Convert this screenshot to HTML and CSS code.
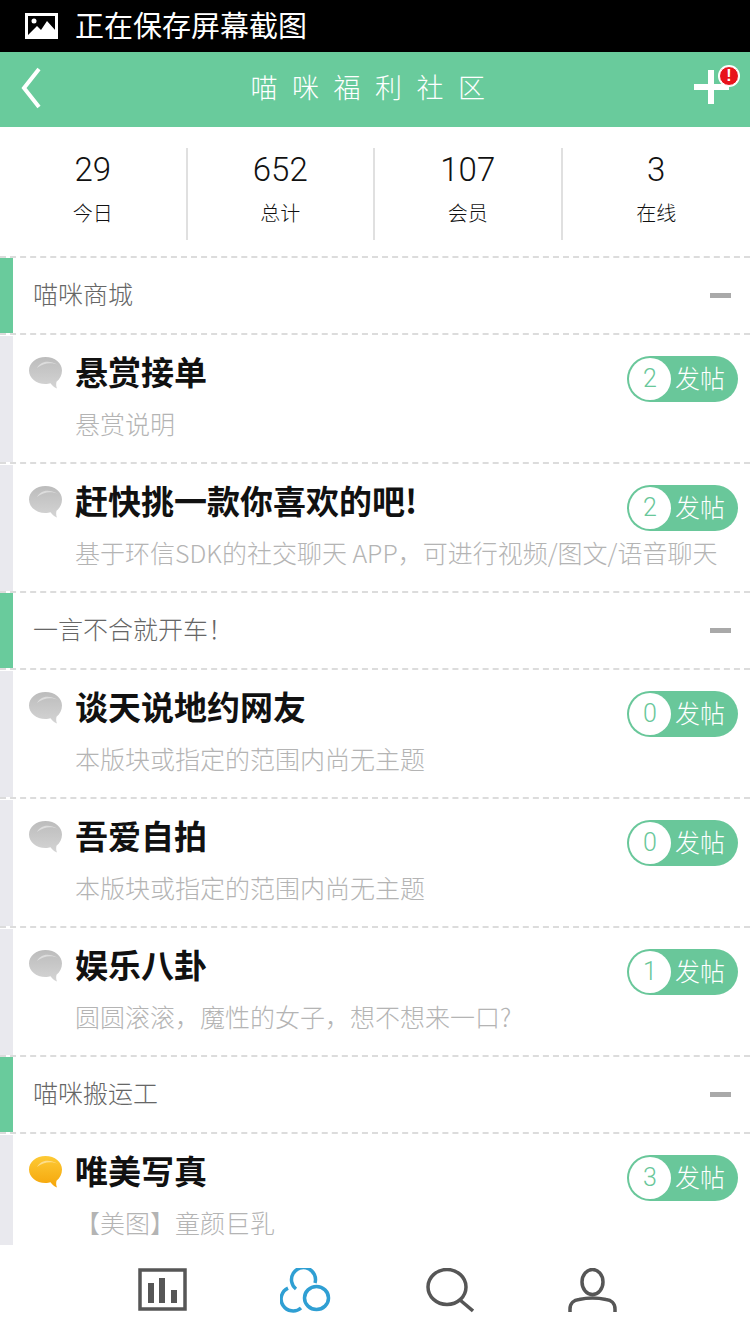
FILE: index.html
```html
<!DOCTYPE html>
<html lang="zh">
<head>
    <meta charset="UTF-8">
    <meta name="viewport" content="width=device-width, initial-scale=1.0">
    <title>喵咪福利社区</title>
    <link rel="stylesheet" href="styles.css">
</head>
<body>
    <svg class="defs" width="0" height="0">
        <defs>
            <linearGradient id="greyFill" x1="0" y1="0" x2="0" y2="1">
                <stop offset="0" stop-color="#bcbcbc"/>
                <stop offset="1" stop-color="#d4d4d4"/>
            </linearGradient>
            <linearGradient id="yellowFill" x1="0" y1="0" x2="0" y2="1">
                <stop offset="0" stop-color="#fdca35"/>
                <stop offset="1" stop-color="#f5a50a"/>
            </linearGradient>
            <path id="bubble" d="M17.500 1C8 1 1 7 1 14.500C1 22 8 28 17.500 28C19.500 28 21 27.800 22.500 27.300C24 29.500 26 31.500 29 32.500C28 30.500 28 28 28.500 25.800C32 23 34 19 34 14.500C34 7 27 1 17.500 1Z"/>
            <path id="shine" d="M9 12C12 6 20 3 30 9C24 6 15 7 9 12Z" fill="#fff" opacity="0.45"/>
        </defs>
    </svg>

    <div class="statusbar">
        <svg class="status-icon" width="33" height="26" viewBox="0 0 33 26">
            <rect x="1.500" y="1.500" width="30" height="23" fill="none" stroke="#fff" stroke-width="3"/>
            <circle cx="9" cy="8" r="2.500" fill="#fff"/>
            <path d="M2 23L12 13L16 17L22 8L31 18V24H2Z" fill="#fff"/>
        </svg>
        <span>正在保存屏幕截图</span>
    </div>

    <header class="topbar">
        <svg class="back" width="24" height="42" viewBox="0 0 24 42">
            <path d="M20 2L5 21L20 40" fill="none" stroke="#fff" stroke-width="4"/>
        </svg>
        <h1>喵咪福利社区</h1>
        <div class="add">
            <svg width="38" height="36" viewBox="0 0 38 36">
                <rect x="0" y="15" width="35" height="6" fill="#fff"/>
                <rect x="14" y="1" width="6" height="34" fill="#fff"/>
            </svg>
            <span class="alert">!</span>
        </div>
    </header>

    <section class="stats">
        <div class="stat"><b>29</b><span>今日</span></div>
        <div class="stat"><b>652</b><span>总计</span></div>
        <div class="stat"><b>107</b><span>会员</span></div>
        <div class="stat"><b>3</b><span>在线</span></div>
    </section>

    <main class="list">
        <div class="group-head"><span>喵咪商城</span><i class="minus"></i></div>
        <div class="item">
            <svg class="bubble" viewBox="0 0 35 33"><use href="#bubble" fill="url(#greyFill)"/><use href="#shine"/></svg>
            <div class="item-text"><h2>悬赏接单</h2><p>悬赏说明</p></div>
            <div class="pill"><span class="num">2</span><span class="label">发帖</span></div>
        </div>
        <div class="item">
            <svg class="bubble" viewBox="0 0 35 33"><use href="#bubble" fill="url(#greyFill)"/><use href="#shine"/></svg>
            <div class="item-text"><h2>赶快挑一款你喜欢的吧!</h2><p>基于环信SDK的社交聊天 APP，可进行视频/图文/语音聊天</p></div>
            <div class="pill"><span class="num">2</span><span class="label">发帖</span></div>
        </div>
        <div class="group-head"><span>一言不合就开车！</span><i class="minus"></i></div>
        <div class="item">
            <svg class="bubble" viewBox="0 0 35 33"><use href="#bubble" fill="url(#greyFill)"/><use href="#shine"/></svg>
            <div class="item-text"><h2>谈天说地约网友</h2><p>本版块或指定的范围内尚无主题</p></div>
            <div class="pill"><span class="num">0</span><span class="label">发帖</span></div>
        </div>
        <div class="item">
            <svg class="bubble" viewBox="0 0 35 33"><use href="#bubble" fill="url(#greyFill)"/><use href="#shine"/></svg>
            <div class="item-text"><h2>吾爱自拍</h2><p>本版块或指定的范围内尚无主题</p></div>
            <div class="pill"><span class="num">0</span><span class="label">发帖</span></div>
        </div>
        <div class="item">
            <svg class="bubble" viewBox="0 0 35 33"><use href="#bubble" fill="url(#greyFill)"/><use href="#shine"/></svg>
            <div class="item-text"><h2>娱乐八卦</h2><p>圆圆滚滚，魔性的女子，想不想来一口?</p></div>
            <div class="pill"><span class="num">1</span><span class="label">发帖</span></div>
        </div>
        <div class="group-head"><span>喵咪搬运工</span><i class="minus"></i></div>
        <div class="item">
            <svg class="bubble" viewBox="0 0 35 33"><use href="#bubble" fill="url(#yellowFill)"/><use href="#shine"/></svg>
            <div class="item-text"><h2>唯美写真</h2><p>【美图】童颜巨乳</p></div>
            <div class="pill"><span class="num">3</span><span class="label">发帖</span></div>
        </div>
    </main>

    <nav class="tabbar">
        <svg width="50" height="44" viewBox="0 0 50 44">
            <rect x="2" y="2" width="45" height="39" fill="none" stroke="#565656" stroke-width="3.500"/>
            <rect x="10" y="15" width="6" height="20" fill="#565656"/>
            <rect x="21" y="10" width="6" height="25" fill="#565656"/>
            <rect x="33" y="22" width="6" height="13" fill="#565656"/>
        </svg>
        <svg width="52" height="46" viewBox="0 0 52 46">
            <g fill="none" stroke="#2f9fd3" stroke-width="3.500">
                <path d="M16 21A12 12 0 1 1 35 15"/>
                <path d="M8 20.100A12 12 0 1 0 21 40"/>
                <ellipse cx="36.500" cy="30" rx="12" ry="11.500"/>
            </g>
        </svg>
        <svg width="50" height="46" viewBox="0 0 50 46">
            <g fill="none" stroke="#565656" stroke-width="3.500">
                <ellipse cx="23" cy="19" rx="19" ry="17.500"/>
                <path d="M36 32L49 43"/>
            </g>
        </svg>
        <svg width="52" height="46" viewBox="0 0 52 46">
            <g fill="none" stroke="#565656" stroke-width="3.500">
                <ellipse cx="26.500" cy="14" rx="10.500" ry="12.500"/>
                <path d="M4 44V41C4 35 8 32 13 31.500C22 29.500 31 29.500 40 31.500C45 32 49 35 49 41V44"/>
            </g>
        </svg>
    </nav>
</body>
</html>
```
FILE: styles.css
```css
* {
    box-sizing: border-box;
}
html, body {
    margin: 0;
    height: 1333px;
}
body {
    font-family: "Noto Sans CJK SC", "Noto Sans", sans-serif;
    background-color: #fff;
    display: flex;
    flex-direction: column;
    overflow: hidden;
}
.defs {
    position: absolute;
}
.statusbar {
    height: 52px;
    flex: none;
    background-color: #000;
    color: #fff;
    font-size: 29px;
    display: flex;
    align-items: center;
    gap: 17px;
    padding-left: 25px;
}
.statusbar span {
    margin-bottom: 4px;
}
.topbar {
    height: 75px;
    flex: none;
    background-color: #69cb9c;
    display: flex;
    align-items: center;
    justify-content: space-between;
    padding: 0 10px 4px 19px;
}
.topbar h1 {
    margin: 0 0 3px 19px;
    color: #fff;
    font-size: 27px;
    font-weight: 300;
    letter-spacing: 14.500px;
}
.add {
    position: relative;
    width: 52px;
    height: 44px;
    padding: 3px 0 0 6px;
}
.alert {
    position: absolute;
    top: 0;
    right: 1px;
    width: 20px;
    height: 20px;
    border-radius: 50%;
    background-color: #e8131b;
    border: 1px solid #fff;
    box-shadow: 0 0 0 1px #fff;
    color: #fff;
    font: bold 16px/18px "Liberation Sans", sans-serif;
    text-align: center;
}
.stats {
    height: 129px;
    flex: none;
    display: flex;
    padding-top: 21px;
    padding-bottom: 16px;
}
.stat {
    width: 187.500px;
    display: flex;
    flex-direction: column;
    align-items: center;
    border-right: 2px solid #e0e0e0;
    color: #111;
}
.stat:last-child {
    border-right: none;
}
.stat b {
    font-family: Roboto, sans-serif;
    font-weight: 300;
    font-size: 33px;
    line-height: 42px;
    margin-top: 1px;
}
.stat span {
    font-size: 20px;
    font-weight: 300;
    line-height: 30px;
    margin-top: 7px;
}
.list {
    flex: 1;
    min-height: 0;
    overflow: hidden;
}
.group-head, .item {
    position: relative;
    display: flex;
    border-top: 2px dashed #dcdcdc;
}
/* colour strip on the left of every row */
.group-head::before, .item::before {
    content: "";
    flex: none;
    width: 13px;
    background-color: #e9e9ee;
}
.group-head {
    height: 77px;
    align-items: center;
    font-size: 25px;
    font-weight: 300;
    color: #666;
}
.group-head::before {
    align-self: stretch;
    background-color: #69cb9c;
}
.group-head span {
    flex: 1;
    margin: 0 0 5px 20px;
}
.minus {
    width: 21px;
    height: 5px;
    margin-right: 19px;
    background-color: #a9a9a9;
}
.item {
    height: 129px;
}
.item::before {
    margin-top: 1px;
}
.bubble {
    width: 35px;
    height: 33px;
    flex: none;
    margin: 21px 0 0 15px;
}
.item-text {
    flex: 1;
    min-width: 0;
    margin: 18px 0 0 12px;
    white-space: nowrap;
}
.item-text h2 {
    margin: 0;
    font-size: 33px;
    font-weight: 700;
    line-height: 36px;
    color: #111;
}
.item-text p {
    margin: 19px 0 0;
    font-size: 25px;
    font-weight: 300;
    line-height: 30px;
    color: #b4b4b4;
}
.pill {
    position: absolute;
    top: 21px;
    right: 12px;
    width: 111px;
    height: 46px;
    border-radius: 23px;
    background-color: #69c79a;
    color: #fff;
    font-size: 25px;
    font-weight: 300;
    display: flex;
    align-items: center;
    gap: 4px;
    padding-left: 2px;
}
.pill .num {
    width: 42px;
    height: 42px;
    border-radius: 50%;
    background-color: #fff;
    color: #69c79a;
    font-family: Roboto, sans-serif;
    font-size: 25px;
    text-align: center;
    line-height: 42px;
}
.pill .label {
    margin-bottom: 4px;
}
.tabbar {
    height: 88px;
    flex: none;
    background-color: #fff;
    display: grid;
    grid-template-columns: 50px 52px 50px 52px;
    column-gap: 92px;
    padding: 23px 0 0 138px;
}
```
